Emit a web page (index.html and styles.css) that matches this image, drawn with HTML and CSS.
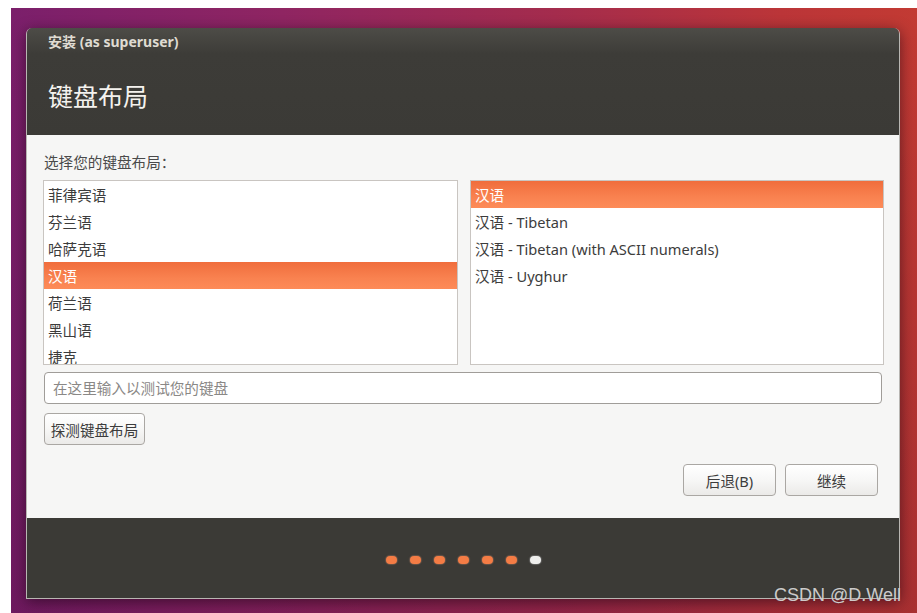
FILE: index.html
```html
<!DOCTYPE html>
<html lang="zh-CN">
<head>
<meta charset="utf-8">
<link rel="stylesheet" href="styles.css">
</head>
<body>
<div class="desktop">
  <div class="window">
    <div class="header">
      <div class="titlebar">安装 (as superuser)</div>
      <h1 class="heading">键盘布局</h1>
    </div>
    <div class="content">
      <div class="label">选择您的键盘布局：</div>
      <div class="lists">
        <div class="list">
          <div class="row">菲律宾语</div>
          <div class="row">芬兰语</div>
          <div class="row">哈萨克语</div>
          <div class="row selected">汉语</div>
          <div class="row">荷兰语</div>
          <div class="row">黑山语</div>
          <div class="row">捷克</div>
        </div>
        <div class="list">
          <div class="row selected">汉语</div>
          <div class="row">汉语 - Tibetan</div>
          <div class="row">汉语 - Tibetan (with ASCII numerals)</div>
          <div class="row">汉语 - Uyghur</div>
        </div>
      </div>
      <div class="input">在这里输入以测试您的键盘</div>
      <div class="detect-row"><button class="btn detect">探测键盘布局</button></div>
      <div class="actions">
        <button class="btn action">后退(B)</button>
        <button class="btn action">继续</button>
      </div>
    </div>
    <div class="footer">
      <span class="dot"></span><span class="dot"></span><span class="dot"></span><span class="dot"></span><span class="dot"></span><span class="dot"></span><span class="dot current"></span>
    </div>
  </div>
</div>
<div class="watermark">CSDN @D.Well</div>
</body>
</html>
```
FILE: styles.css
```css
html, body {
  margin: 0;
  padding: 0;
  background: #ffffff;
  width: 917px;
  height: 613px;
  overflow: hidden;
  position: relative;
  font-family: "Noto Sans", "Noto Sans CJK SC", sans-serif;
}

.desktop {
  margin-left: 11px;
  margin-top: 8px;
  width: 906px;
  height: 605px;
  padding: 20px 0 0 15px;
  box-sizing: border-box;
  background:
    linear-gradient(180deg, rgba(0,0,0,0) 0%, rgba(50,0,40,0.18) 100%),
    linear-gradient(90deg, #7b1f6b 0%, #8f2562 30%, #a42c4d 60%, #bb3538 85%, #c23a33 100%);
}

.window {
  width: 874px;
  height: 571px;
  display: flex;
  flex-direction: column;
  border-radius: 6px 6px 0 0;
  box-shadow: 0 3px 14px rgba(20, 0, 15, 0.55);
  overflow: hidden;
  border: 1px solid #b8b6b2;
  border-top: none;
  box-sizing: border-box;
}

.header {
  height: 107px;
  background: linear-gradient(180deg, #4d4c47 0px, #3d3c38 26px, #3b3a36 100%);
  padding-left: 21px;
  color: #f2f1ed;
  display: flex;
  flex-direction: column;
}

.titlebar {
  font-size: 14px;
  font-weight: bold;
  line-height: 16px;
  margin-top: 6px;
  color: #dfdbd2;
}

.heading {
  margin: 31px 0 0 0;
  font-weight: normal;
  font-size: 25px;
  line-height: 30px;
  color: #f4f2ee;
}

.content {
  height: 383px;
  background: #f6f6f5;
  padding: 18px 16px 0 16px;
  box-sizing: border-box;
  display: flex;
  flex-direction: column;
  color: #3c3c3c;
  font-size: 14.6px;
}

.label {
  line-height: 18px;
  padding-left: 1px;
  color: #4a4a4a;
}

.lists {
  margin-top: 9px;
  display: flex;
  gap: 12px;
}

.list {
  height: 185px;
  box-sizing: border-box;
  border: 1px solid #c9c5c1;
  background: #ffffff;
  overflow: hidden;
  flex: 0 0 415px;
}

.list + .list {
  flex: 0 0 414px;
}

.row {
  height: 27px;
  line-height: 29px;
  padding-left: 4px;
  color: #3c3c3c;
  white-space: nowrap;
  overflow: hidden;
}

.row.selected {
  background: linear-gradient(180deg, #f06d3c 0%, #f98250 60%, #fd8b58 100%);
  color: #ffffff;
}

.input {
  margin-top: 7px;
  height: 32px;
  box-sizing: border-box;
  border: 1px solid #a09d99;
  border-radius: 4px;
  background: #ffffff;
  line-height: 31px;
  padding-left: 8px;
  color: #8a8886;
  margin-left: 1px;
  margin-right: 1px;
}

.detect-row {
  margin-top: 9px;
  display: flex;
}

.btn {
  font-family: "Noto Sans", "Noto Sans CJK SC", sans-serif;
  font-size: 14.6px;
  color: #3c3c3c;
  height: 32px;
  box-sizing: border-box;
  border: 1px solid #aaa7a3;
  border-radius: 4px;
  background: linear-gradient(180deg, #ffffff 0%, #f7f7f6 50%, #ebeae8 100%);
  padding: 1px 0 0 0;
  line-height: 30px;
}

.detect {
  width: 101px;
  margin-left: 1px;
}

.actions {
  margin-top: 19px;
  display: flex;
  justify-content: flex-end;
  gap: 9px;
  padding-right: 5px;
}

.action {
  width: 93px;
}

.footer {
  flex: 1;
  background: #3b3a36;
  display: flex;
  align-items: center;
  justify-content: center;
  gap: 13px;
  padding-top: 3px;
}

.dot {
  width: 11px;
  height: 8px;
  border-radius: 4px;
  background: #f47c45;
  box-shadow: 0 0 1px 1px rgba(150, 110, 90, 0.5);
}

.dot.current {
  background: #eeeeec;
  box-shadow: 0 0 1px 1px rgba(140, 140, 140, 0.5);
}

.watermark {
  position: absolute;
  right: 16px;
  bottom: 8px;
  font-family: "Liberation Sans", Arial, sans-serif;
  font-size: 18px;
  line-height: 20px;
  color: rgba(225, 225, 225, 0.88);
  text-shadow: 0 0 1px rgba(60, 60, 60, 0.6);
}
```
